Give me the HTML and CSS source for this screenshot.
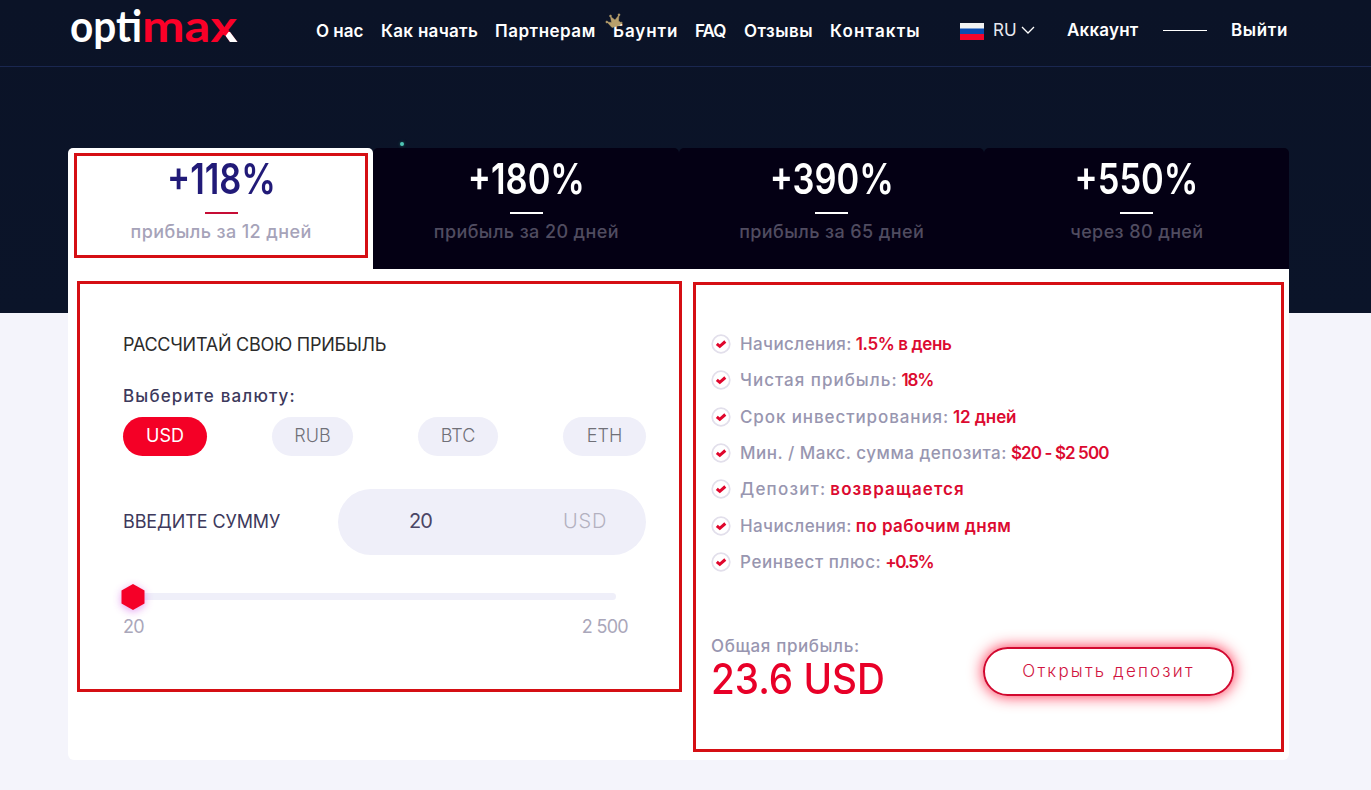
FILE: index.html
```
<!DOCTYPE html>
<html lang="ru">
<head>
    <meta charset="UTF-8">
    <meta name="viewport" content="width=device-width, initial-scale=1.0">
    <title>Optimax</title>
    <link rel="stylesheet" href="styles.css">
</head>
<body>
    <header class="header">
        <a class="logo" href="#">
            <svg width="170" height="50" viewBox="0 0 170 50">
                <text x="1" y="41.500" textLength="72" lengthAdjust="spacingAndGlyphs" fill="#fff">opti</text>
                <text x="73" y="41.500" textLength="95" lengthAdjust="spacingAndGlyphs" fill="#fb0028">max</text>
                <path d="M155 32 H161 L168.500 42 H161 L154.500 33 Z" fill="#fff"/>
                <path d="M153 34 L156.500 29.500 L159.500 32 L156.500 36 Z" fill="#fb0028"/>
            </svg>
        </a>
        <nav class="nav">
            <a href="#">О нас</a>
            <a href="#">Как начать</a>
            <a href="#">Партнерам</a>
            <a href="#" class="bounty">Баунти
                <svg class="crown" width="18" height="17" viewBox="0 0 18 17">
                    <g fill="#b8a06c" stroke="#b8a06c" stroke-width=".5">
                        <path d="M2 9 L6.500 9.500 L5.500 3.500 L10 7 L14 2 L13.500 8 L16.500 10 L14.500 12.500 L7 14.500 Z"/>
                        <circle cx="1.800" cy="9" r="1"/>
                        <circle cx="5.500" cy="3" r="1"/>
                        <circle cx="14" cy="1.800" r="1"/>
                        <circle cx="16.500" cy="10" r=".8"/>
                    </g>
                </svg>
            </a>
            <a href="#">FAQ</a>
            <a href="#">Отзывы</a>
            <a href="#">Контакты</a>
        </nav>
        <div class="lang">
            <svg width="24" height="17" viewBox="0 0 24 17">
                <rect width="24" height="6" fill="#f3f3f3"/>
                <rect y="5.500" width="24" height="6" fill="#0b4cb0"/>
                <rect y="11" width="24" height="6" fill="#f5052b"/>
            </svg>
            <span>RU</span>
            <svg width="14" height="9" viewBox="0 0 14 9">
                <path d="M1 1 L7 7 L13 1" fill="none" stroke="#fff" stroke-width="1.300"/>
            </svg>
        </div>
        <div class="user">
            <a href="#" class="account">Аккаунт</a>
            <i></i>
            <a href="#" class="logout">Выйти</a>
        </div>
    </header>

    <main class="container">
        <span class="spark"></span>
        <div class="tabs">
            <div class="tab active">
                <div class="tab-inner">
                    <b>+118%</b>
                    <i></i>
                    <span>прибыль за 12 дней</span>
                </div>
            </div>
            <div class="tab">
                <div class="tab-inner">
                    <b>+180%</b>
                    <i></i>
                    <span>прибыль за 20 дней</span>
                </div>
            </div>
            <div class="tab">
                <div class="tab-inner">
                    <b>+390%</b>
                    <i></i>
                    <span>прибыль за 65 дней</span>
                </div>
            </div>
            <div class="tab">
                <div class="tab-inner">
                    <b>+550%</b>
                    <i></i>
                    <span>через 80 дней</span>
                </div>
            </div>
        </div>

        <div class="panel">
            <section class="box calc">
                <h2>РАССЧИТАЙ СВОЮ ПРИБЫЛЬ</h2>
                <p class="choose">Выберите валюту:</p>
                <div class="currencies">
                    <span class="cur selected">USD</span>
                    <span class="cur rub">RUB</span>
                    <span class="cur btc">BTC</span>
                    <span class="cur eth">ETH</span>
                </div>
                <div class="amount">
                    <span class="amount-label">ВВЕДИТЕ СУММУ</span>
                    <div class="amount-field">
                        <span class="value">20</span>
                        <span class="unit">USD</span>
                    </div>
                </div>
                <div class="slider">
                    <svg class="handle" width="24" height="26" viewBox="0 0 24 26">
                        <path d="M12 0 L23.500 6.500 V19.500 L12 26 L.5 19.500 V6.500 Z" fill="#f50028"/>
                    </svg>
                </div>
                <div class="range">
                    <span>20</span>
                    <span>2 500</span>
                </div>
            </section>

            <section class="box info">
                <ul class="terms">
                    <li><span>Начисления:</span> <b>1.5% в день</b></li>
                    <li><span>Чистая прибыль:</span> <b>18%</b></li>
                    <li><span>Срок инвестирования:</span> <b>12 дней</b></li>
                    <li><span>Мин. / Макс. сумма депозита:</span> <b>$20 - $2 500</b></li>
                    <li><span>Депозит:</span> <b>возвращается</b></li>
                    <li><span>Начисления:</span> <b>по рабочим дням</b></li>
                    <li><span>Реинвест плюс:</span> <b>+0.5%</b></li>
                </ul>
                <div class="total">
                    <div class="sum">
                        <span>Общая прибыль:</span>
                        <b>23.6 USD</b>
                    </div>
                    <a href="#" class="open">Открыть депозит</a>
                </div>
            </section>
        </div>
    </main>

    <script>
        // same tick icon in front of every line of the list
        document.querySelectorAll(".terms li").forEach(function(li) {
            li.insertAdjacentHTML("afterbegin",
                `<svg width="20" height="20" viewBox="0 0 20 20">
                    <circle cx="10" cy="10" r="8.800" fill="#fff" stroke="#e2dfeb" stroke-width="1.700"/>
                    <path d="M5.800 9.800 L8.800 12.300 L14.300 7.500" fill="none" stroke="#e0062c" stroke-width="3"/>
                </svg>`);
        });
    </script>
</body>
</html>
```
FILE: styles.css
```
* {
    box-sizing: border-box;
}

body {
    margin: 0;
    height: 790px;
    font-family: Inter, "Open Sans", sans-serif;
    background: linear-gradient(#0b1327 0, #0b1429 313px, #f4f4fb 313px);
    overflow: hidden;
}

a {
    color: #fff;
    text-decoration: none;
}

.header {
    display: flex;
    height: 67px;
    padding-left: 69px;
    border-bottom: 1px solid #1a2750;
    white-space: nowrap;
}

.logo {
    width: 247px;
}

.logo svg {
    display: block;
}

.logo text {
    font: 700 43px Lato, sans-serif;
}

.nav {
    display: grid;
    grid-template-columns: 65px 114px 118px 82px 49px 86px 130px;
    height: 62px;
    line-height: 62px;
    font-size: 17px;
    font-weight: 600;
}

.nav a:nth-child(2) { letter-spacing: .3px; }
.nav a:nth-child(3) { letter-spacing: .5px; }
.nav a:nth-child(4) { letter-spacing: .9px; }
.nav a:nth-child(5) { letter-spacing: -1px; }
.nav a:nth-child(6) { letter-spacing: .5px; }
.nav a:nth-child(7) { letter-spacing: 1.150px; }

.bounty {
    position: relative;
}

.crown {
    position: absolute;
    left: -8px;
    top: 13px;
}

.lang {
    display: flex;
    align-items: center;
    width: 107px;
    height: 60px;
    color: #e8e8f0;
    font-size: 17px;
}

.lang svg:first-child {
    margin-top: 2px;
}

.lang span {
    width: 37px;
    padding-left: 9px;
}

.user {
    display: flex;
    align-items: center;
    height: 59px;
    font-size: 17px;
    font-weight: 600;
}

.user i {
    width: 44px;
    height: 1px;
    margin-top: 1px;
    background: #fff;
}

.account {
    width: 96px;
    letter-spacing: .2px;
}

.logout {
    margin-left: 24px;
    letter-spacing: .6px;
}

.container {
    position: relative;
    width: 1221px;
    margin: 81px 0 0 68px;
}

.spark {
    position: absolute;
    left: 332px;
    top: -6px;
    width: 4px;
    height: 4px;
    border-radius: 50%;
    background: #4fc4b4;
    box-shadow: 0 0 3px #1b665e;
}

.tabs {
    display: grid;
    grid-template-columns: repeat(4, 1fr);
    height: 121px;
}

.tab {
    padding: 5px 5px 11px 6px;
    border-radius: 5px 5px 0 0;
    background: #040014;
    color: #fff;
}

.tab-inner {
    display: flex;
    flex-direction: column;
    align-items: center;
    height: 105px;
    border: 3px solid transparent;
}

.tab b {
    height: 46px;
    line-height: 46px;
    font-size: 42px;
    font-weight: 600;
    transform: scaleX(.82);
}

.tab i {
    width: 33px;
    height: 2px;
    margin: 10px 0 5px;
    background: #fff;
}

.tab span {
    line-height: 26px;
    font-size: 18px;
    font-weight: 500;
    letter-spacing: .4px;
    color: #504c60;
}

.tab.active {
    background: #fff;
}

.active .tab-inner {
    border-color: #d50f14;
}

.active b {
    color: #211a78;
}

.active i {
    background: #c60d35;
}

.tab.active span {
    color: #a6a3b9;
}

.panel {
    display: flex;
    align-items: flex-start;
    height: 491px;
    padding: 12px 5px 0 9px;
    border-radius: 0 0 6px 6px;
    background: #fff;
    white-space: nowrap;
}

.box {
    border: 3px solid #d50f14;
}

.calc {
    width: 605px;
    height: 411px;
    padding: 46px 33px 0 43px;
}

.calc h2 {
    margin: 0;
    line-height: 30px;
    font-size: 18px;
    font-weight: 400;
    letter-spacing: -.25px;
    color: #2b2b2b;
}

.choose {
    margin: 23px 0 8px;
    line-height: 26px;
    font-size: 17px;
    font-weight: 500;
    letter-spacing: 1.150px;
    color: #3d395c;
}

.currencies {
    display: flex;
    height: 39px;
}

.cur {
    border-radius: 20px;
    background: #efeff9;
    line-height: 37px;
    text-align: center;
    font-size: 18px;
    font-weight: 300;
    color: #707078;
}

.selected {
    width: 84px;
    background: #f40026;
    color: #fff;
    font-weight: 400;
}

.rub { width: 81px; margin-left: 65px; }
.btc { width: 80px; margin-left: 65px; }
.eth { width: 83px; margin-left: 65px; }

.amount {
    display: flex;
    align-items: center;
    height: 66px;
    margin-top: 33px;
}

.amount-label {
    width: 215px;
    padding-bottom: 1px;
    font-size: 18px;
    letter-spacing: -.1px;
    color: #3d395c;
}

.amount-field {
    display: flex;
    width: 308px;
    height: 66px;
    border-radius: 33px;
    background: #efeff9;
    line-height: 64px;
    font-size: 20px;
}

.value {
    width: 225px;
    padding-left: 71px;
    letter-spacing: -1px;
    color: #4a4565;
}

.unit {
    font-weight: 300;
    letter-spacing: .8px;
    color: #b3b1c0;
}

.slider {
    position: relative;
    width: 493px;
    height: 7px;
    margin-top: 38px;
    border-radius: 4px;
    background: #efeff9;
}

.handle {
    position: absolute;
    left: -2px;
    top: -9px;
    overflow: visible;
    filter: drop-shadow(0 2px 4px rgba(190, 40, 220, .45));
}

.range {
    display: flex;
    justify-content: space-between;
    width: 505px;
    margin-top: 14px;
    line-height: 26px;
    font-size: 18px;
    letter-spacing: -.7px;
    color: #aaa7ba;
}

.info {
    width: 591px;
    height: 470px;
    margin: 1px 0 0 11px;
    padding: 41px 47px 0 15px;
}

.terms {
    margin: 0;
    padding: 0;
    list-style: none;
    font-size: 17px;
    color: #9896b0;
}

.terms li {
    display: flex;
    align-items: center;
    height: 36.300px;
}

.terms svg {
    margin-right: 9px;
}

.terms span {
    font-weight: 500;
    letter-spacing: .4px;
}

.terms b {
    margin-left: 4px;
    font-weight: 600;
    letter-spacing: -.4px;
    color: #dc0a30;
}

.terms li:nth-child(2) span { letter-spacing: 1px; }
.terms li:nth-child(2) b { letter-spacing: -1.200px; }
.terms li:nth-child(3) span { letter-spacing: .9px; }
.terms li:nth-child(3) b { letter-spacing: -.1px; }
.terms li:nth-child(4) span { letter-spacing: .5px; }
.terms li:nth-child(4) b { letter-spacing: -.9px; }
.terms li:nth-child(5) span { letter-spacing: 1.200px; }
.terms li:nth-child(5) b { letter-spacing: 1.100px; }
.terms li:nth-child(6) b { letter-spacing: .4px; }
.terms li:nth-child(7) span { letter-spacing: .6px; }
.terms li:nth-child(7) b { letter-spacing: -1.500px; }

.total {
    display: flex;
    justify-content: space-between;
    margin-top: 54px;
}

.sum span {
    display: block;
    line-height: 25px;
    font-size: 17px;
    font-weight: 500;
    letter-spacing: .6px;
    color: #9896b0;
}

.sum b {
    display: block;
    line-height: 39px;
    font-size: 42px;
    font-weight: 500;
    color: #e80028;
    transform: scaleX(.92);
    transform-origin: left;
}

.open {
    width: 251px;
    height: 49px;
    margin-top: 13px;
    border: 2px solid #d2082f;
    border-radius: 25px;
    box-shadow: 0 0 15px rgba(255, 0, 40, .85);
    line-height: 44px;
    text-align: center;
    font-size: 17px;
    font-weight: 300;
    letter-spacing: 2.200px;
    color: #d11440;
}
```
